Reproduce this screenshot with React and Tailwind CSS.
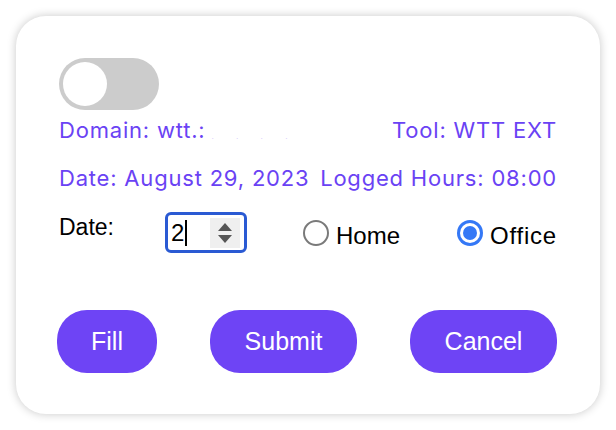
import React from "react";

export default function App() {
  return (
    <div className="w-[616px] h-[430px] bg-white pt-4 pl-4">
      <div className="w-[584px] h-[398px] bg-white rounded-[30px] shadow-[0_0_10px_rgba(0,0,0,0.22)] pt-[42px] px-[43px] flex flex-col">
        {/* toggle */}
        <div className="w-[100px] h-[52px] rounded-full bg-[#cccccc] flex items-center pl-[4px]">
          <div className="w-[44px] h-[44px] rounded-full bg-white" />
        </div>

        <div className="mt-[8px] flex justify-between items-center h-[24px] text-[22px] tracking-[0.8px] leading-[24px] text-[#6a42f4] font-['Inter',sans-serif] whitespace-nowrap">
          <div className="flex items-end">
            <span>Domain: wtt.:</span>
            <span className="ml-[6px] text-[8px] leading-[8px] mb-[2px] text-[#d6ccfb] tracking-[10px]">. . . .</span>
          </div>
          <span>Tool: WTT EXT</span>
        </div>

        <div className="mt-[24px] flex justify-between items-center h-[24px] text-[22px] tracking-[0.8px] leading-[24px] text-[#6a42f4] font-['Inter',sans-serif] whitespace-nowrap">
          <span>Date: August 29, 2023</span>
          <span>Logged Hours: 08:00</span>
        </div>

        <div className="mt-[22px] flex items-start h-[41px] font-['Liberation_Sans',Arial,sans-serif] text-black">
          <span className="text-[23px] leading-[26px] mt-[2px] w-[106px]">Date:</span>
          <div className="w-[82px] h-[41px] border-[3px] border-[#2a5ad3] rounded-[6px] flex items-center pl-[3px] pr-[4px]">
            <span className="text-[24px] leading-[28px]">2</span>
            <span className="w-[2px] h-[26px] bg-black ml-[1px]" />
            <div className="ml-auto w-[30px] h-[30px] bg-[#efefef] flex flex-col items-center justify-center gap-[4px]">
              <svg width="14" height="8" viewBox="0 0 14 8"><path d="M7 0 L14 8 L0 8 Z" fill="#555" /></svg>
              <svg width="14" height="8" viewBox="0 0 14 8"><path d="M0 0 L14 0 L7 8 Z" fill="#555" /></svg>
            </div>
          </div>
          <div className="ml-[56px] flex items-center mt-[4px]">
            <div className="w-[26px] h-[26px] rounded-full border-2 border-[#7a7a7a] bg-white" />
            <span className="ml-[7px] text-[24px] leading-[28px] mt-[6px]">Home</span>
          </div>
          <div className="ml-auto flex items-center mt-[4px]">
            <div className="w-[26px] h-[26px] rounded-full bg-[#3478f6] flex items-center justify-center">
              <div className="w-[20px] h-[20px] rounded-full bg-white flex items-center justify-center">
                <div className="w-[14px] h-[14px] rounded-full bg-[#3478f6]" />
              </div>
            </div>
            <span className="ml-[7px] text-[24px] tracking-[0.8px] leading-[28px] mt-[6px]">Office</span>
          </div>
        </div>

        <div className="mt-[57px] flex justify-between font-['Liberation_Sans',Arial,sans-serif]">
          <button className="ml-[-2px] w-[100px] h-[63px] rounded-[30px] bg-[#6e44f5] text-white text-[25px]">Fill</button>
          <button className="w-[147px] h-[63px] rounded-[30px] bg-[#6e44f5] text-white text-[25px]">Submit</button>
          <button className="w-[147px] h-[63px] rounded-[30px] bg-[#6e44f5] text-white text-[25px]">Cancel</button>
        </div>
      </div>
    </div>
  );
}
